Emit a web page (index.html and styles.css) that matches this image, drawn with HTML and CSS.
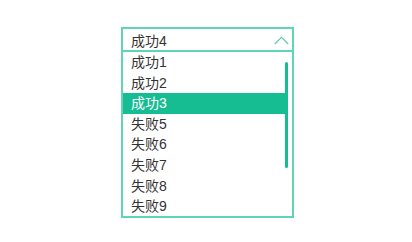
FILE: index.html
```html
<!DOCTYPE html>
<html lang="zh-CN">
<head>
    <meta charset="UTF-8">
    <title>下拉选择</title>
    <link rel="stylesheet" href="styles.css">
</head>
<body>
<div class="select">
    <div class="head">
        <span class="val">成功4</span>
        <svg class="arrow" width="15" height="9" viewBox="0 0 15 9"><path d="M0.8 8 L7.5 1.3 L14.2 8" fill="none" stroke="#5fcbab" stroke-width="1.2"/></svg>
    </div>
    <div class="drop">
        <ul class="list">
            <li>成功1</li>
            <li>成功2</li>
            <li class="on">成功3</li>
            <li>失败5</li>
            <li>失败6</li>
            <li>失败7</li>
            <li>失败8</li>
            <li>失败9</li>
        </ul>
        <!-- 滚动条 -->
        <div class="thumb"></div>
    </div>
</div>
</body>
</html>
```
FILE: styles.css
```css
*{
    margin: 0;
    padding: 0;
}
body{
    background: #fff;
    font-family: "Liberation Sans", "Noto Sans CJK SC", sans-serif;
    font-size: 14px;
    color: #333;
}
.select{
    width: 173px;
    margin: 27px 0 0 121px;
}
.head{
    height: 21px;
    border: 2px solid #5ed5b4;
    display: flex;
    align-items: center;
    justify-content: space-between;
    padding: 0 3px 0 8px;
}
.arrow{
    margin-top: 1px;
}
.drop{
    position: relative;
    height: 164px;
    border: 2px solid #5ed5b4;
    border-top: none;
    overflow: hidden;
}
.list{
    list-style: none;
    margin-right: 7px;
}
.list li{
    height: 20.6px;
    line-height: 20.6px;
    padding-left: 8px;
}
.list li.on{
    background: #17bd92;
    color: #fff;
}
.thumb{
    position: absolute;
    right: 4px;
    top: 10px;
    width: 3px;
    height: 106px;
    border-radius: 2px;
    background: #17bd92;
}
```
